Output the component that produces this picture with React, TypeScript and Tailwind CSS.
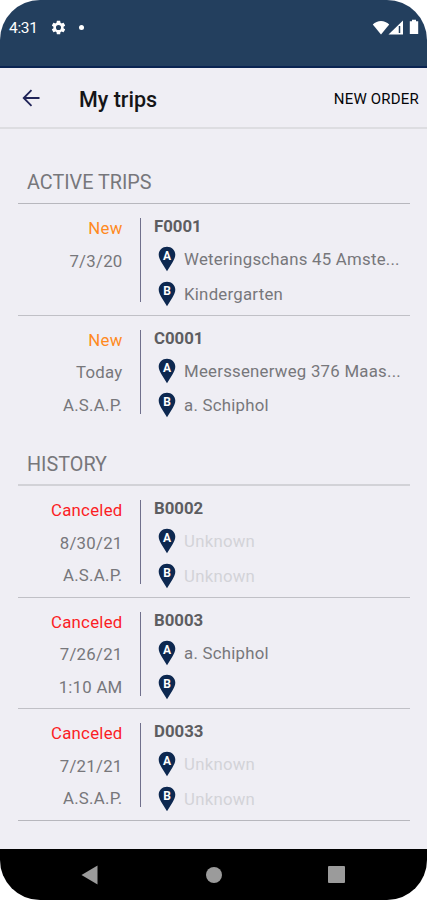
import clsx from "clsx";

type Trip = {
  code: string;
  status: "New" | "Canceled";
  date: string;
  time?: string;
  from?: string;
  to?: string;
};

const activeTrips: Trip[] = [
  {
    code: "F0001",
    status: "New",
    date: "7/3/20",
    from: "Weteringschans 45 Amste...",
    to: "Kindergarten",
  },
  {
    code: "C0001",
    status: "New",
    date: "Today",
    time: "A.S.A.P.",
    from: "Meerssenerweg 376 Maas...",
    to: "a. Schiphol",
  },
];

const historyTrips: Trip[] = [
  { code: "B0002", status: "Canceled", date: "8/30/21", time: "A.S.A.P." },
  {
    code: "B0003",
    status: "Canceled",
    date: "7/26/21",
    time: "1:10 AM",
    from: "a. Schiphol",
    to: "",
  },
  { code: "D0033", status: "Canceled", date: "7/21/21", time: "A.S.A.P." },
];

function Pin({ letter }: { letter: string }) {
  return (
    <svg viewBox="0 0 18 26" className="h-[26px] w-[18px] shrink-0">
      <path
        d="M9 .8C4.400 .8 .7 4.200 .7 8.800c0 2.800 1.500 5.200 3 8L9 25.200l5.300-8.400c1.500-2.800 3-5.200 3-8C17.300 4.200 13.600.8 9 .8z"
        fill="#0d2850"
      />
      <text
        x="9"
        y="14"
        textAnchor="middle"
        fill="#fff"
        className="font-[Roboto,sans-serif] text-[12px] font-bold tracking-normal"
      >
        {letter}
      </text>
    </svg>
  );
}

function Place({ letter, name }: { letter: string; name?: string }) {
  return (
    <div className="flex h-[26px] items-center gap-2">
      <Pin letter={letter} />
      <span
        className={clsx(
          "whitespace-nowrap",
          name === undefined ? "text-[#d3d3d8]" : "text-[#77777b]"
        )}
      >
        {name ?? "Unknown"}
      </span>
    </div>
  );
}

function TripRow({ trip, last }: { trip: Trip; last?: boolean }) {
  return (
    <div
      className={clsx(
        "flex pt-[14px] text-[16.800px] leading-5 tracking-[0.25px]",
        last ? "h-[110.500px]" : "h-[111.500px]"
      )}
    >
      {/* Status and date */}
      <div className="flex w-[104.500px] flex-col gap-[12.500px] text-right text-[#77777b]">
        <span
          className={
            trip.status === "New" ? "text-[#ff8a1f]" : "text-[#fb1d24]"
          }
        >
          {trip.status}
        </span>
        <span>{trip.date}</span>
        <span>{trip.time}</span>
      </div>
      <div className="ml-[17px] h-[84px] w-px bg-[#70708c]" />
      {/* Code and places */}
      <div className="ml-[13.500px] flex flex-col">
        <span className="-mt-0.5 font-bold tracking-normal text-[#5d5d61]">
          {trip.code}
        </span>
        <div className="mt-[10px] ml-[4px] flex flex-col gap-[8.500px]">
          <Place letter="A" name={trip.from} />
          <Place letter="B" name={trip.to} />
        </div>
      </div>
    </div>
  );
}

function StatusBar() {
  return (
    <div className="flex h-[68px] items-start justify-between border-b-2 border-[#0a2452] bg-[#233f5e] pt-[18px] pr-[7px] pl-[9px] text-white">
      <div className="flex h-5 items-center">
        <span className="w-[41px] pt-px text-[15.500px] tracking-[-0.3px]">
          4:31
        </span>
        <svg viewBox="0 0 24 24" className="-mt-px size-[17px]" fill="currentColor">
          <path d="M19.140 12.940c.040-.300.060-.610.060-.940 0-.320-.020-.640-.070-.940l2.030-1.580c.180-.140.230-.410.120-.610l-1.920-3.320c-.120-.220-.370-.290-.590-.220l-2.390.960c-.500-.380-1.030-.700-1.620-.940L14.400 2.810c-.040-.240-.240-.410-.480-.410h-3.840c-.240 0-.430.170-.470.410L9.250 5.350c-.590.240-1.130.570-1.620.940L5.240 5.330c-.220-.080-.470 0-.590.220L2.740 8.870c-.120.210-.080.470.120.610l2.030 1.580c-.050.300-.090.630-.090.940s.020.640.070.940l-2.030 1.580c-.180.140-.230.410-.120.610l1.920 3.320c.120.220.370.290.590.220l2.390-.960c.500.380 1.030.700 1.620.940l.360 2.540c.050.240.240.410.480.410h3.840c.240 0 .440-.170.470-.410l.360-2.540c.590-.240 1.130-.560 1.620-.940l2.390.960c.220.080.470 0 .590-.220l1.920-3.320c.120-.220.070-.470-.120-.610l-2.010-1.580zM12 15.600A3.600 3.600 0 1 1 12 8.400a3.600 3.600 0 0 1 0 7.200z" />
        </svg>
        <div className="ml-[12px] -mt-px size-[5px] rounded-full bg-white" />
      </div>
      <div className="flex h-[18px] items-center">
        <svg viewBox="0 0 18 15" className="-mr-0.5 h-[15px] w-[18px]">
          <path d="M9 14.600.8 4.500C3 2.300 6 1 9 1s6 1.300 8.200 3.500z" fill="#fff" />
        </svg>
        <svg viewBox="0 0 16 15" className="h-[15px] w-4">
          <path d="M15 .5V14.500H.5z" fill="#fff" />
          <path d="M11.500 6v7" stroke="#233f5e" strokeWidth="1.500" />
        </svg>
        <svg viewBox="0 0 10 16" className="ml-[5px] mr-px h-4 w-[10px]">
          <path d="M3 .8h4v1.500h2.200V15H.8V2.300H3z" fill="#fff" />
        </svg>
      </div>
    </div>
  );
}

function AppBar() {
  return (
    <div className="flex h-[61px] items-center justify-between border-b-2 border-[#dddde1] pr-[8px] pl-[22px]">
      <div className="flex items-center">
        <svg
          viewBox="0 0 18 18"
          className="mt-px size-[18px]"
          fill="none"
          stroke="#202458"
          strokeWidth="1.800"
        >
          <path d="M17.500 9H2M9.500 1.200 1.700 9l7.800 7.800" />
        </svg>
        <h1 className="ml-[39px] pt-[5px] text-[21.500px] font-medium text-[#151517]">
          My trips
        </h1>
      </div>
      <span className="pt-[3px] text-[15px] tracking-[0.2px] text-[#050508]">
        NEW ORDER
      </span>
    </div>
  );
}

export default function App() {
  return (
    <div className="bg-white">
      <div className="flex h-[900px] w-[427px] flex-col overflow-hidden rounded-[40px] bg-[#efeef4] font-[Roboto,sans-serif]">
        <StatusBar />
        <AppBar />

        <div className="grow pt-[35px] pr-[17px] pl-[18px]">
          <h2 className="h-[40px] border-b border-[#b7b7bd] pt-[5px] pl-[9px] text-[19.800px] leading-7 text-[#77777b]">
            ACTIVE TRIPS
          </h2>
          <div className="divide-y divide-[#c0c0c6]">
            {activeTrips.map((trip) => (
              <TripRow key={trip.code} trip={trip} />
            ))}
          </div>

          <h2 className="mt-[19px] h-[40px] border-b-2 border-[#d2d2d7] pt-[5px] pl-[9px] text-[19.800px] leading-7 text-[#77777b]">
            HISTORY
          </h2>
          <div className="divide-y divide-[#c0c0c6] border-b border-[#b7b7bd]">
            {historyTrips.map((trip, index) => (
              <TripRow
                key={trip.code}
                trip={trip}
                last={index === historyTrips.length - 1}
              />
            ))}
          </div>
        </div>

        {/* Navigation bar */}
        <div className="flex h-[51px] items-center bg-black text-[#9b9b9b]">
          <svg viewBox="0 0 17 20" className="ml-[81px] h-5 w-[17px]">
            <path d="M16.500.500v19L.5 10z" fill="currentColor" />
          </svg>
          <div className="ml-[108px] size-4 rounded-full bg-[#9b9b9b]" />
          <div className="ml-[106px] size-[17px] rounded-[1px] bg-[#9b9b9b]" />
        </div>
      </div>
    </div>
  );
}
